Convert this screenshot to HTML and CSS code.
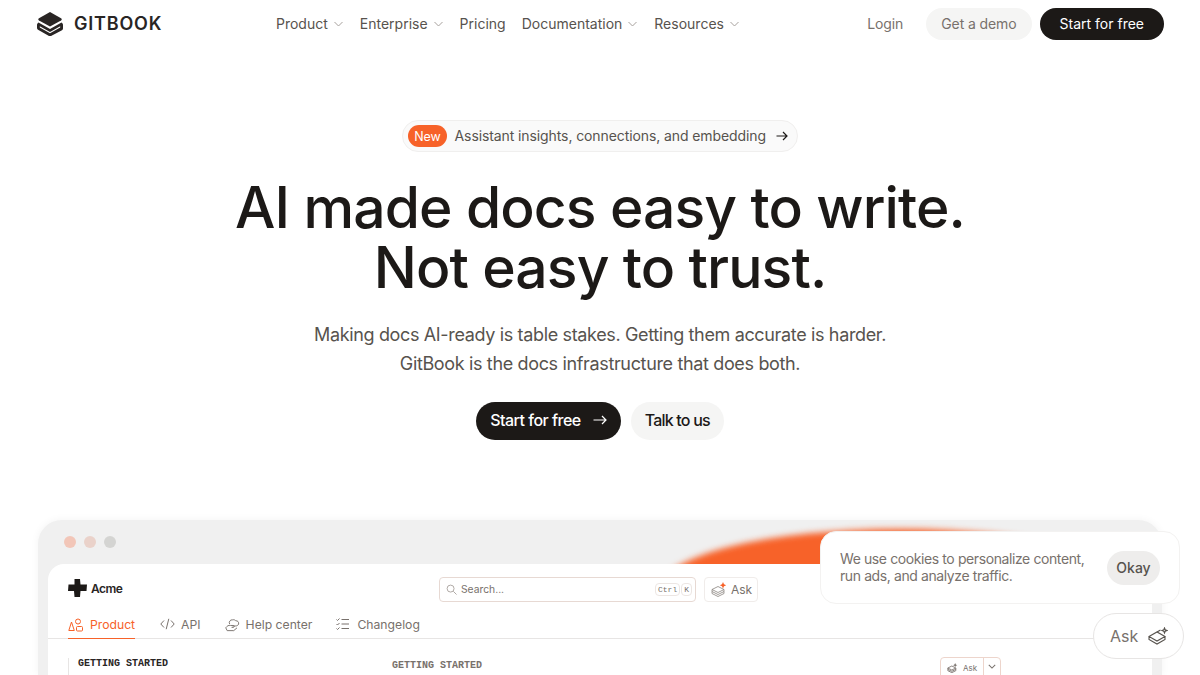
FILE: index.html
```html
<!DOCTYPE html>
<html lang="en">
<head>
    <meta charset="UTF-8">
    <meta name="viewport" content="width=device-width, initial-scale=1.0">
    <title>GitBook</title>
    <link rel="stylesheet" href="styles.css">
</head>
<body>
    <header class="nav">
        <a class="logo" href="#">
            <svg width="28" height="24" viewBox="0 0 28 24"><path d="M14 0 3 6.200c-1 .6-1 1.600 0 2.200L14 14.500 25 8.400c1-.6 1-1.600 0-2.200z" fill="#292524"/><path d="M2.500 10.500 14 17l11.500-6.500c1 .8 1.500 1.500 1.500 2.500v3.500c0 .8-.4 1.400-1 1.700L15 24c-.6.300-1.400.300-2 0L2 17.700c-.6-.3-1-.9-1-1.700v-3c0-1 .5-1.700 1.500-2.500zM3.800 14.300v1.200L14 21.300l10.200-5.800v-1.200L14 20z" fill="#292524" fill-rule="evenodd"/></svg>
            <span class="logo-text">GITBOOK</span>
        </a>
        <nav class="nav-links">
            <a href="#">Product <svg class="chev" viewBox="0 0 10 6"><path d="M1 1l4 4 4-4"/></svg></a>
            <a href="#">Enterprise <svg class="chev" viewBox="0 0 10 6"><path d="M1 1l4 4 4-4"/></svg></a>
            <a href="#">Pricing</a>
            <a href="#">Documentation <svg class="chev" viewBox="0 0 10 6"><path d="M1 1l4 4 4-4"/></svg></a>
            <a href="#">Resources <svg class="chev" viewBox="0 0 10 6"><path d="M1 1l4 4 4-4"/></svg></a>
        </nav>
        <div class="nav-actions">
            <a class="login" href="#">Login</a>
            <a class="btn-small btn-grey" href="#">Get a demo</a>
            <a class="btn-small btn-dark" href="#">Start for free</a>
        </div>
    </header>

    <section class="hero">
        <a class="pill" href="#">
            <span class="pill-new">New</span>
            <span class="pill-text">Assistant insights, connections, and embedding</span>
            <svg class="pill-arrow" viewBox="0 0 12 10"><path d="M0.500 5h10.500M7 1l4 4-4 4"/></svg>
        </a>
        <h1>AI made docs easy to write.<br>Not easy to trust.</h1>
        <p class="lead">Making docs AI-ready is table stakes. Getting them accurate is harder.<br>GitBook is the docs infrastructure that does both.</p>
        <div class="cta-row">
            <a class="cta cta-dark" href="#">Start for free
                <svg class="cta-arrow" viewBox="0 0 14 10"><path d="M0.500 5h12.500M9 1l4 4-4 4"/></svg>
            </a>
            <a class="cta cta-grey" href="#">Talk to us</a>
        </div>
    </section>

    <section class="preview">
        <div class="glow"></div>
        <div class="dots">
            <span class="dot dot-a"></span>
            <span class="dot dot-b"></span>
            <span class="dot dot-c"></span>
        </div>
        <div class="doc">
            <div class="doc-top">
                <div class="acme">
                    <svg width="19" height="18" viewBox="0 0 19 18"><path d="M6.500 0h5.500l.5 5.500H19l-.5 6.500h-6l-.5 6H6.500L6 12H0l.5-6.500h6z" fill="#1c1917"/></svg>
                    <span>Acme</span>
                </div>
                <div class="search-wrap">
                    <div class="search">
                        <svg class="search-icon" viewBox="0 0 12 12"><circle cx="5" cy="5" r="3.800"/><path d="M8 8l3.500 3.500"/></svg>
                        <span class="search-text">Search...</span>
                        <span class="kbd">Ctrl</span>
                        <span class="kbd">K</span>
                    </div>
                    <div class="doc-ask">
                        <svg width="16" height="15" viewBox="0 0 16 15"><path d="M1 7.500l6-3 6 3-6 3zM1 7.500v2l6 3 6-3v-2M1 9.500v2l6 3 6-3v-2" fill="none" stroke="#8a837e" stroke-width=".8"/><path d="M12 0l1 2.200 2.200 1-2.200 1-1 2.200-1-2.200-2.200-1 2.200-1z" fill="#f76229"/></svg>
                        <span>Ask</span>
                    </div>
                </div>
            </div>
            <div class="tabs">
                <a class="tab tab-active" href="#">
                    <svg width="15" height="14" viewBox="0 0 15 14" fill="none" stroke="currentColor"><path d="M3.500 4 .8 12.500h5.500z"/><circle cx="10" cy="3.500" r="2.500"/><rect x="8.500" y="8.500" width="6" height="4.500" rx="1"/></svg>
                    Product
                </a>
                <a class="tab" href="#">
                    <svg width="15" height="12" viewBox="0 0 15 12" fill="none" stroke="currentColor"><path d="M4 2.500.8 6 4 9.500M11 2.500 14.200 6 11 9.500M8.800 .8 6.200 11.200"/></svg>
                    API
                </a>
                <a class="tab" href="#">
                    <svg width="15" height="14" viewBox="0 0 16 14" fill="none" stroke="currentColor"><path d="M5 6a3 3 0 0 1 3-4.500c2-.5 3 .5 3.500 1 2-.3 3.500 1.500 3 3.500-.5 1.500-2 2-3 2H8"/><path d="M.8 10c1.500-2 3-3 5-2.500h3c1.500 0 1.500 2 0 2H7M.8 10l1.500 3h7l3.500-3"/></svg>
                    Help center
                </a>
                <a class="tab" href="#">
                    <svg width="15" height="12" viewBox="0 0 15 12" fill="none" stroke="currentColor"><path d="M5.500 1.500H13M5.500 6H13M5.500 10.500H13M.5 1.500l1 1 2-2M.5 6l1 1 2-2M.5 10.500l1 1 2-2"/></svg>
                    Changelog
                </a>
            </div>
            <div class="doc-body">
                <div class="side-title">GETTING STARTED</div>
                <div class="main-title">GETTING STARTED</div>
                <div class="page-ask">
                    <span class="page-ask-left">
                        <svg width="11" height="10" viewBox="0 0 16 15"><path d="M1 7.500l6-3 6 3-6 3zM1 7.500v2l6 3 6-3v-2M1 9.500v2l6 3 6-3v-2" fill="none" stroke="#78716c" stroke-width="1.300"/><path d="M12 0l1 2.200 2.200 1-2.200 1-1 2.200-1-2.200-2.200-1 2.200-1z" fill="#78716c"/></svg>
                        Ask
                    </span>
                    <span class="page-ask-right">
                        <svg width="8" height="5" viewBox="0 0 10 6" fill="none" stroke="#78716c" stroke-width="1.300"><path d="M1 1l4 4 4-4"/></svg>
                    </span>
                </div>
            </div>
        </div>
    </section>

    <aside class="cookie">
        <p>We use cookies to personalize content,<br>run ads, and analyze traffic.</p>
        <button class="cookie-ok">Okay</button>
    </aside>

    <button class="ask-float">
        Ask
        <svg width="20" height="19" viewBox="0 0 20 19" fill="none" stroke="#57534e" stroke-width="1.100"><path d="M1 9.500l8-4.500 8 4.500-8 4.500zM1 9.500v3l8 4.500 8-4.500v-3M9 5l3.500-2"/><path d="M16.500 1l.7 1.800 1.800.7-1.800.7-.7 1.800-.7-1.800-1.800-.7 1.800-.7z"/></svg>
    </button>
</body>
</html>
```

FILE: styles.css
```css
* {
    box-sizing: border-box;
}

html, body {
    height: 675px;
    overflow: hidden;
}

body {
    margin: 0;
    background: #fff;
    color: #1c1917;
    font-family: Inter, "Liberation Sans", sans-serif;
    position: relative;
}

a {
    color: inherit;
    text-decoration: none;
}

.nav {
    display: flex;
    align-items: center;
    height: 47px;
    padding: 0 36px;
}

.logo {
    display: flex;
    align-items: center;
    gap: 10px;
    width: 240px;
}

.logo-text {
    font-size: 18px;
    font-weight: 600;
    letter-spacing: 0.800px;
    color: #292524;
}

.nav-links {
    display: flex;
    gap: 16px;
    font-size: 14px;
    color: #57534e;
}

.nav-links a {
    display: flex;
    align-items: center;
    gap: 5px;
}

.chev {
    width: 11px;
    height: 6px;
    fill: none;
    stroke: #a8a29e;
}

.nav-actions {
    display: flex;
    align-items: center;
    margin-left: auto;
    font-size: 14px;
}

.login {
    color: #78716c;
    margin-right: 23px;
    letter-spacing: -0.100px;
}

.btn-small {
    display: flex;
    align-items: center;
    height: 32px;
    padding: 0 15px;
    border-radius: 16px;
}

.btn-grey {
    background: #f5f5f4;
    color: #78716c;
    margin-right: 8px;
    letter-spacing: -0.100px;
}

.btn-dark {
    background: #1c1917;
    color: #fff;
    padding: 0 20px;
}

.hero {
    display: flex;
    flex-direction: column;
    align-items: center;
    padding-top: 73px;
}

.pill {
    display: flex;
    align-items: center;
    height: 32px;
    padding: 0 9px 0 5px;
    border: 1px solid #f0efee;
    border-radius: 16px;
    background: #fafafa;
    font-size: 14px;
    letter-spacing: -0.100px;
    color: #57534e;
}

.pill-new {
    display: flex;
    align-items: center;
    height: 22px;
    padding: 0 6px;
    margin-right: 8px;
    border-radius: 11px;
    background: #f76229;
    color: #fff;
    font-size: 12.500px;
}

.pill-text {
    padding-bottom: 2px;
}

.pill-arrow {
    width: 12px;
    height: 10px;
    margin-left: 10px;
    fill: none;
    stroke: #1c1917;
    stroke-width: 1.200;
}

h1 {
    margin: 26px 0 0;
    font-size: 57px;
    line-height: 60px;
    font-weight: 500;
    letter-spacing: -0.900px;
    text-align: center;
    color: #1c1917;
}

.lead {
    margin: 22px 0 0;
    font-size: 18px;
    line-height: 29px;
    text-align: center;
    color: #57534e;
    letter-spacing: -0.350px;
}

.cta-row {
    display: flex;
    gap: 10px;
    margin-top: 24px;
}

.cta {
    display: flex;
    align-items: center;
    height: 38px;
    padding: 0 14px 2px;
    border-radius: 19px;
    font-size: 16px;
    font-weight: 500;
    letter-spacing: -0.500px;
}

.cta-dark {
    background: #1c1917;
    color: #fff;
    gap: 12px;
}

.cta-grey {
    background: #f5f5f4;
    color: #1c1917;
    letter-spacing: -0.800px;
}

.cta-arrow {
    width: 14px;
    height: 10px;
    fill: none;
    stroke: #fff;
    stroke-width: 1.200;
}

.preview {
    position: absolute;
    left: 38px;
    top: 520px;
    width: 1124px;
    height: 155px;
    border-radius: 24px 24px 0 0;
    background: #f0f0f0;
    box-shadow: 0 0 8px rgba(0, 0, 0, 0.05);
    overflow: hidden;
}

.glow {
    position: absolute;
    left: 622px;
    top: 9px;
    width: 480px;
    height: 120px;
    border-radius: 50%;
    background: #f76229;
    filter: blur(3px);
}

.dots {
    position: relative;
    display: flex;
    gap: 8px;
    padding: 16px 0 0 26px;
}

.dot {
    width: 12px;
    height: 12px;
    border-radius: 50%;
}

.dot-a {
    background: #f2c6b8;
}

.dot-b {
    background: #ead2ca;
}

.dot-c {
    background: #d4d4d2;
}

.doc {
    position: absolute;
    left: 10px;
    top: 44px;
    width: 1104px;
    height: 111px;
    border-radius: 16px 16px 0 0;
    background: #fff;
}

.doc-top {
    position: relative;
    height: 53px;
    padding: 15px 0 0 20px;
}

.acme {
    display: flex;
    align-items: center;
    gap: 4px;
    font-size: 12px;
    font-weight: 600;
    letter-spacing: -0.500px;
    color: #292524;
}

.search-wrap {
    position: absolute;
    left: 391px;
    top: 13px;
    display: flex;
    gap: 8px;
}

.search {
    display: flex;
    align-items: center;
    width: 257px;
    height: 25px;
    padding: 0 3px 0 6px;
    border: 1px solid #e7d9d3;
    border-radius: 4px;
    font-size: 10.300px;
    color: #78716c;
}

.search-icon {
    width: 11px;
    height: 11px;
    margin-right: 4px;
    fill: none;
    stroke: #a8a29e;
}

.search-text {
    flex: 1;
    padding-bottom: 2px;
}

.kbd {
    padding: 1px 2px;
    margin-left: 1px;
    border: 1px solid #ece6e3;
    border-radius: 4px;
    font-family: "Liberation Mono", monospace;
    font-size: 8px;
}

.doc-ask {
    display: flex;
    align-items: center;
    gap: 4px;
    height: 25px;
    padding: 0 5px 0 6px;
    border: 1px solid #f0ecea;
    border-radius: 4px;
    font-size: 12px;
    letter-spacing: -0.100px;
    color: #78716c;
}

.tabs {
    display: flex;
    gap: 24px;
    height: 22px;
    padding-left: 20px;
    border-bottom: 1px solid #e7e5e4;
}

.tab {
    display: flex;
    align-items: flex-start;
    gap: 6px;
    font-size: 12.200px;
    line-height: 15px;
    color: #78716c;
}

.tab svg {
    margin-top: 1px;
}

.tab-active {
    height: 22px;
    gap: 7px;
    margin-right: 1px;
    color: #f76229;
    border-bottom: 1px solid #f76229;
}

.doc-body {
    position: relative;
}

.side-title {
    position: absolute;
    left: 20px;
    top: 19px;
    padding-left: 9px;
    border-left: 1px solid #e7e5e4;
    height: 40px;
    font-family: "Liberation Mono", monospace;
    font-size: 10px;
    line-height: 11px;
    font-weight: 700;
    color: #292524;
}

.main-title {
    position: absolute;
    left: 344px;
    top: 21px;
    font-family: "Liberation Mono", monospace;
    font-size: 10px;
    line-height: 11px;
    font-weight: 700;
    color: #78716c;
}

.page-ask {
    position: absolute;
    left: 892px;
    top: 18px;
    display: flex;
    height: 40px;
    border: 1px solid #edd5cc;
    border-radius: 4px;
    font-size: 8px;
    color: #78716c;
}

.page-ask-left {
    display: flex;
    align-items: flex-start;
    gap: 5px;
    padding: 5px 6px 0 6px;
    line-height: 10px;
    border-right: 1px solid #edd5cc;
}

.page-ask-right {
    padding: 3px 4px 0 4px;
}

.cookie {
    position: absolute;
    left: 820px;
    top: 531px;
    display: flex;
    align-items: center;
    justify-content: space-between;
    width: 360px;
    height: 73px;
    padding: 0 19px;
    border: 1px solid #f3f2f1;
    border-radius: 16px;
    background: #fff;
    font-size: 14px;
    line-height: 17px;
    color: #78716c;
}

.cookie p {
    margin: 0 0 2px;
    letter-spacing: -0.400px;
}

.cookie-ok {
    width: 53px;
    height: 34px;
    border: none;
    border-radius: 17px;
    background: #eeedec;
    color: #57534e;
    font-family: inherit;
    font-size: 14px;
    font-weight: 500;
}

.ask-float {
    position: absolute;
    left: 1093px;
    top: 613px;
    display: flex;
    align-items: center;
    gap: 10px;
    width: 91px;
    height: 46px;
    padding: 0 0 0 16px;
    border: 1px solid #e7e5e4;
    border-radius: 23px;
    background: #fff;
    font-family: inherit;
    font-size: 16px;
    color: #78716c;
}
```
